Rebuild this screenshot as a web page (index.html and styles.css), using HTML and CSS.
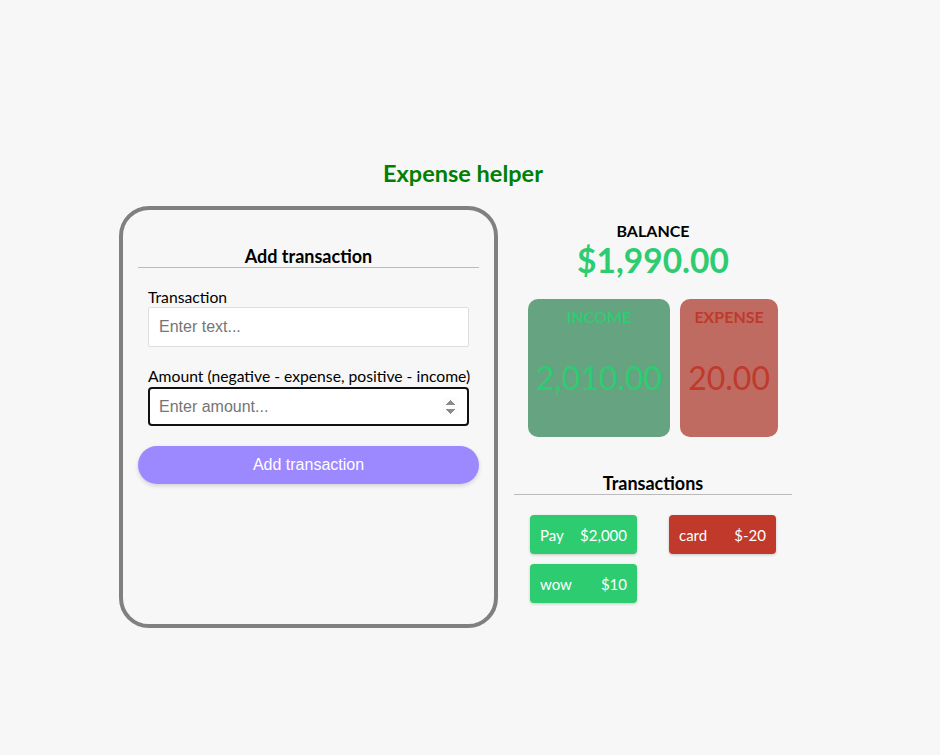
FILE: index.html
```html
<!DOCTYPE html>
<html lang="en">
<head>
    <meta charset="UTF-8">
    <meta name="viewport" content="width=device-width, initial-scale=1.0">
    <title>Expense helper</title>
    <link rel="stylesheet" href="styles.css">
</head>
<body>
    <h2 class="title">Expense helper</h2>
    <div class="wrapper">
        <div class="card">
            <h3 class="section-title">Add transaction</h3>
            <form class="form">
                <div class="form-control">
                    <label for="text">Transaction</label>
                    <input type="text" id="text" placeholder="Enter text...">
                </div>
                <div class="form-control">
                    <label for="amount">Amount (negative - expense, positive - income)</label>
                    <input type="number" id="amount" class="focused" placeholder="Enter amount...">
                </div>
                <button type="button" class="btn">Add transaction</button>
            </form>
        </div>

        <div class="summary">
            <h4 class="balance-label">BALANCE</h4>
            <h1 class="balance">$1,990.00</h1>

            <div class="totals">
                <div class="total income">
                    <h4>INCOME</h4>
                    <p>2,010.00</p>
                </div>
                <div class="total expense">
                    <h4>EXPENSE</h4>
                    <p>20.00</p>
                </div>
            </div>

            <h3 class="section-title list-title">Transactions</h3>
            <ul class="list">
                <li class="plus"><span>Pay</span><span>$2,000</span></li>
                <li class="minus"><span>card</span><span>$-20</span></li>
                <li class="plus"><span>wow</span><span>$10</span></li>
            </ul>
        </div>
    </div>
</body>
</html>
```

FILE: styles.css
```css
* {
    box-sizing: border-box;
}

body {
    font-family: Lato, "Liberation Sans", sans-serif;
    background-color: #f7f7f7;
    margin: 0;
    padding-top: 158px;
}

.title {
    color: green;
    text-align: center;
    font-size: 23.5px;
    margin: 0 0 18px 0;
    line-height: 30px;
    width: 926px;
}

.wrapper {
    display: flex;
    align-items: flex-start;
    gap: 16px;
    margin-left: 119px;
}

.card {
    width: 379px;
    height: 422px;
    border: 4px solid #808080;
    border-radius: 30px;
    padding: 15px;
}

.section-title {
    font-size: 18px;
    text-align: center;
    margin: 20px 0 0 0;
    line-height: 22px;
    border-bottom: 1px solid #bbb;
}

.form {
    margin-top: 20px;
}

.form-control {
    padding: 0 10px;
    margin-bottom: 20px;
}

.form-control label {
    display: block;
    font-size: 15.7px;
    line-height: 19px;
    white-space: nowrap;
}

.form-control input {
    display: block;
    width: 100%;
    height: 40px;
    border: 1px solid #dedede;
    border-radius: 2px;
    background-color: #fff;
    font-family: "Liberation Sans", Arial, sans-serif;
    font-size: 16px;
    padding: 0 10px;
    margin-top: 0;
}

.form-control input::placeholder {
    color: #757575;
}

.form-control input.focused {
    border: 2px solid #111;
    border-radius: 4px;
    height: 39px;
    margin-top: 1px;
    padding: 0 9px;
}

.form-control input::-webkit-inner-spin-button {
    opacity: 1;
}

.btn {
    display: block;
    width: 100%;
    height: 38px;
    margin-top: 20px;
    background-color: #9c88ff;
    color: #fff;
    border: none;
    border-radius: 19px;
    font-family: "Liberation Sans", Arial, sans-serif;
    font-size: 16px;
    box-shadow: 0 2px 4px rgba(0, 0, 0, 0.15);
    cursor: pointer;
}

.summary {
    width: 278px;
    text-align: center;
    padding-top: 15px;
}

.balance-label {
    font-size: 16px;
    margin: 0;
    line-height: 19px;
}

.balance {
    color: #2ecc71;
    font-size: 33.5px;
    margin: 0;
    line-height: 40px;
}

.totals {
    display: flex;
    justify-content: center;
    gap: 10px;
    margin-top: 19px;
}

.total {
    padding: 8px;
    border-radius: 10px;
}

.total h4 {
    font-size: 16px;
    line-height: 19px;
    margin: 0;
}

.total p {
    font-size: 32px;
    line-height: 40px;
    margin: 32px 0 31px 0;
}

.income {
    background-color: #66a381;
    color: #2ecc71;
}

.expense {
    background-color: #bf6b61;
    color: #c0392b;
}

.list-title {
    margin-top: 35px;
}

.list {
    list-style: none;
    padding: 0;
    margin: 20px 0 0 0;
    display: grid;
    grid-template-columns: 1fr 1fr;
    row-gap: 10px;
}

.list li {
    display: flex;
    justify-content: space-between;
    align-items: center;
    width: 107px;
    height: 39px;
    margin-left: 16px;
    padding: 0 10px;
    border-radius: 4px;
    color: #fff;
    font-size: 15px;
    box-shadow: 0 1px 3px rgba(0, 0, 0, 0.2);
}

.list li.plus {
    background-color: #2ecc71;
}

.list li.minus {
    background-color: #c0392b;
}
```
